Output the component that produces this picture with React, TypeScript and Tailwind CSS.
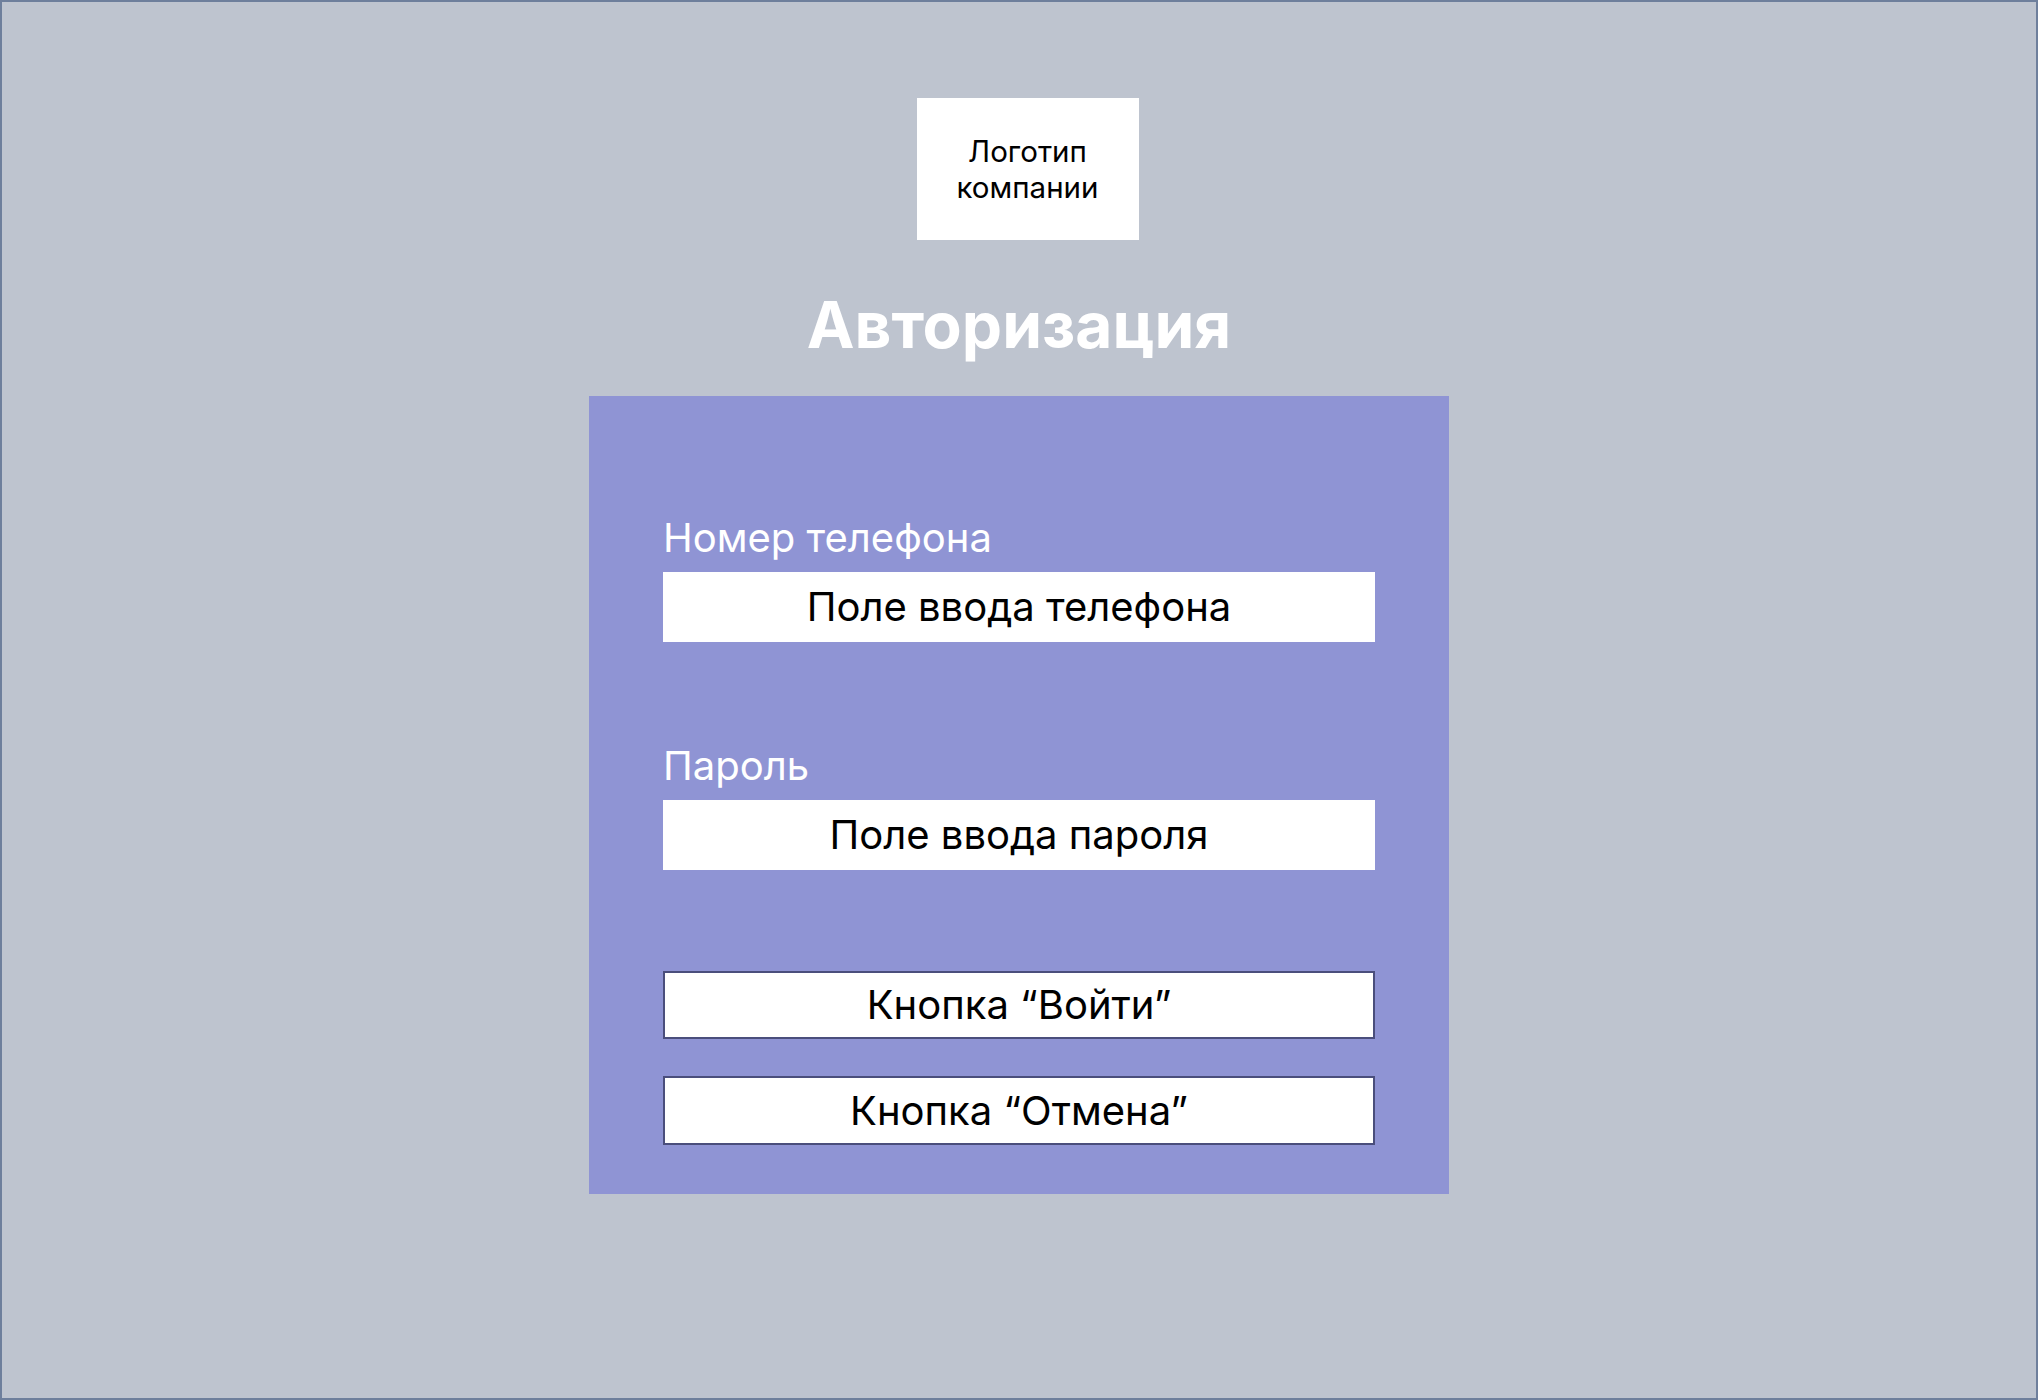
export default function App() {
  const font = { fontFamily: "Inter, 'Noto Sans', sans-serif" };

  return (
    <div
      className="h-[1400px] w-full border-2 border-[#6e7f9c] bg-[#bec4cf] flex flex-col items-center pt-[96px]"
      style={font}
    >
      {/* Logo */}
      <div className="ml-[17px] w-[222px] h-[142px] bg-white flex items-center justify-center">
        <p className="text-center text-[29.5px] leading-[36px] text-black">
          Логотип
          <br />
          компании
        </p>
      </div>

      {/* Title */}
      <h1 className="mt-[46px] text-[64px] leading-[77px] font-bold text-white">Авторизация</h1>

      {/* Form panel */}
      <div className="mt-[33px] w-[860px] h-[798px] bg-[#8f94d4] px-[74px] pt-[118px] flex flex-col">
        <label className="text-[40px] leading-[48px] text-white">Номер телефона</label>
        <div className="mt-[10px] h-[70px] bg-white flex items-center justify-center text-[40px] leading-[48px] text-black">
          Поле ввода телефона
        </div>

        <label className="mt-[100px] text-[40px] leading-[48px] text-white">Пароль</label>
        <div className="mt-[10px] h-[70px] bg-white flex items-center justify-center text-[40px] leading-[48px] text-black">
          Поле ввода пароля
        </div>

        <button className="mt-[101px] h-[68px] bg-white border-2 border-[#4a4e7c] flex items-center justify-center text-[40px] leading-[48px] text-black">
          Кнопка “Войти”
        </button>
        <button className="mt-[37px] h-[69px] bg-white border-2 border-[#4a4e7c] flex items-center justify-center text-[40px] leading-[48px] text-black">
          Кнопка “Отмена”
        </button>
      </div>
    </div>
  );
}
